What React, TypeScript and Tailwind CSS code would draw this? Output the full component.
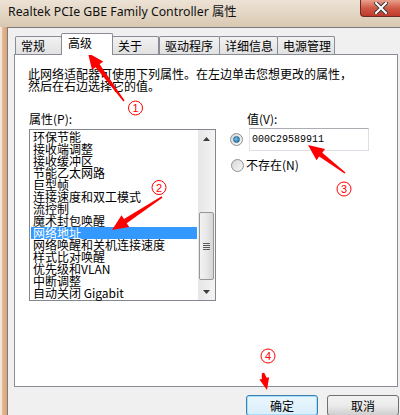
import React from "react";

const items = [
  "环保节能",
  "接收端调整",
  "接收缓冲区",
  "节能乙太网路",
  "巨型帧",
  "连接速度和双工模式",
  "流控制",
  "魔术封包唤醒",
  "网络地址",
  "网络唤醒和关机连接速度",
  "样式比对唤醒",
  "优先级和VLAN",
  "中断调整",
  "自动关闭 Gigabit",
];

const tabs = [
  { label: "常规", w: "w-[47px]" },
  { label: "高级", w: "w-[52px]", active: true },
  { label: "关于", w: "w-[47px]" },
  { label: "驱动程序", w: "w-[61px]" },
  { label: "详细信息", w: "w-[59px]" },
  { label: "电源管理", w: "w-[58px]" },
];

function arrow(tx: number, ty: number, hx: number, hy: number, head = 16, hw = 7, sw = 2.5, tw = 0.8) {
  const dx = hx - tx;
  const dy = hy - ty;
  const l = Math.sqrt(dx * dx + dy * dy);
  const ux = dx / l;
  const uy = dy / l;
  const nx = -uy;
  const ny = ux;
  const bx = hx - ux * head;
  const by = hy - uy * head;
  const pts = [
    [tx + nx * tw, ty + ny * tw],
    [bx + nx * sw, by + ny * sw],
    [bx + nx * hw, by + ny * hw],
    [hx, hy],
    [bx - nx * hw, by - ny * hw],
    [bx - nx * sw, by - ny * sw],
    [tx - nx * tw, ty - ny * tw],
  ];
  return pts.map((p) => p[0].toFixed(1) + "," + p[1].toFixed(1)).join(" ");
}

function Radio({ checked }: { checked?: boolean }) {
  return (
    <div className="w-[13px] h-[13px] rounded-full border border-[#8e8f8f] bg-gradient-to-br from-[#d6d6d6] to-[#f8f8f8] flex items-center justify-center">
      {checked && (
        <div className="w-[7px] h-[7px] rounded-full bg-[radial-gradient(circle_at_40%_40%,#6ec8f0,#1c5b8a)] border border-[#2f6f9a]" />
      )}
    </div>
  );
}

export default function App() {
  return (
    <div className="relative w-[400px] h-[415px] overflow-hidden bg-[#f0f0f0] font-['Noto_Sans_CJK_SC',sans-serif] text-[12px] text-black">
      {/* title bar */}
      <div className="h-[27px] flex items-start bg-gradient-to-b from-[#ece2d5] via-[#e3d6c4] to-[#d9c8b1]">
        <div className="pl-[8px] pt-[4px] text-[12.3px] leading-[16px] font-['Noto_Sans','Noto_Sans_CJK_SC',sans-serif] text-[#111]">
          Realtek PCIe GBE Family Controller 属性
        </div>
        <div className="ml-auto w-[40px] h-[17px] rounded-bl-[4px] border border-t-0 border-r-0 border-[#6b2a22] bg-gradient-to-b from-[#e8a08e] via-[#cf5a45] to-[#c0392b] flex items-center justify-center">
          <svg width="14" height="12" viewBox="0 0 14 12">
            <path d="M2 1 L12 11 M12 1 L2 11" stroke="#3a3a3a" strokeWidth="4" strokeLinecap="square" />
            <path d="M2 1 L12 11 M12 1 L2 11" stroke="#ffffff" strokeWidth="2" strokeLinecap="square" />
          </svg>
        </div>
      </div>

      <div className="flex h-[388px]">
        {/* left frame */}
        <div className="w-[2px] bg-[#f2e6da]" />
        <div className="w-[5px] bg-gradient-to-r from-[#e6bb95] to-[#dba47a]" />
        <div className="flex-1 border-l border-t border-[#7c7c7c] bg-[#f0f0f0]">
          {/* tabs */}
          <div className="flex items-end h-[26px] pl-[7px]">
            {tabs.map((t, i) =>
              t.active ? (
                <div
                  key={t.label}
                  className={`${t.w} ml-[-1px] h-[22px] mb-[-1px] relative z-10 bg-white border border-b-0 border-[#898c95] rounded-t-[2px] pl-[6px] pt-[2px] leading-[14px]`}
                >
                  {t.label}
                </div>
              ) : (
                <div
                  key={t.label}
                  className={`${t.w} ${i === 0 || i === 3 ? "" : "ml-[-1px]"} h-[18px] bg-gradient-to-b from-[#f2f2f2] to-[#e1e1e1] border border-b-0 border-[#898c95] rounded-t-[2px] pl-[5px] pt-[2px] leading-[14px]`}
                >
                  {t.label}
                </div>
              )
            )}
          </div>

          {/* panel */}
          <div className="ml-[6px] w-[384px] h-[333px] bg-white border border-[#898c95] pl-[13px] pt-[13px]">
            <div className="leading-[12px]">
              此网络适配器可使用下列属性。在左边单击您想更改的属性，
              <br />
              然后在右边选择它的值。
            </div>

            <div className="flex mt-[21px] ml-[1px]">
              <div className="w-[187px]">
                <div className="leading-[12px]">属性(P):</div>
                <div className="mt-[4px] h-[172px] border border-[#828790] flex">
                  <div className="flex-1 pt-[1px] px-[1px]">
                    {items.map((it) => (
                      <div
                        key={it}
                        className={`h-[12px] leading-[12px] pl-[2px] whitespace-nowrap ${
                          it === "网络地址" ? "bg-[#3399ff] text-white" : ""
                        }`}
                      >
                        {it}
                      </div>
                    ))}
                  </div>
                  {/* scrollbar */}
                  <div className="w-[17px] flex flex-col bg-gradient-to-r from-[#e6e6e6] to-[#f4f4f4]">
                    <div className="h-[17px] flex items-center justify-center">
                      <svg width="7" height="4" viewBox="0 0 7 4">
                        <path d="M0 4 L3.5 0 L7 4 Z" fill="#3c3c3c" />
                      </svg>
                    </div>
                    <div className="h-[65px]" />
                    <div className="h-[68px] mx-[1px] rounded-[2px] border border-[#979797] bg-gradient-to-r from-[#f3f3f3] via-[#e8e8e8] to-[#d6d6d6] flex flex-col items-center justify-center gap-[1px]">
                      <div className="w-[7px] h-[1px] bg-[#5b5b5b]" />
                      <div className="w-[7px] h-[1px] bg-[#5b5b5b]" />
                      <div className="w-[7px] h-[1px] bg-[#5b5b5b]" />
                      <div className="w-[7px] h-[1px] bg-[#5b5b5b]" />
                    </div>
                    <div className="h-[3px]" />
                    <div className="h-[17px] flex items-center justify-center">
                      <svg width="7" height="4" viewBox="0 0 7 4">
                        <path d="M0 0 L3.5 4 L7 0 Z" fill="#3c3c3c" />
                      </svg>
                    </div>
                  </div>
                </div>
              </div>

              <div className="ml-[14px]">
                <div className="pl-[17px] leading-[12px]">值(V):</div>
                <div className="flex items-center mt-[3px] h-[23px]">
                  <Radio checked />
                  <div className="ml-[6px] w-[120px] h-[23px] border border-[#dbdfe6] border-t-[#abadb3] border-l-[#e2e3ea] flex items-center pl-[2px] font-['Liberation_Mono',monospace] text-[10px]">
                    000C29589911
                  </div>
                </div>
                <div className="flex items-center mt-[8px] h-[12px] ml-[1px]">
                  <Radio />
                  <span className="ml-[2px] leading-[12px]">不存在(N)</span>
                </div>
              </div>
            </div>
          </div>

          {/* buttons */}
          <div className="flex justify-end gap-[9px] pr-[1px] mt-[8px]">
            <button className="w-[72px] h-[21px] rounded-[3px] border border-[#3c7fb1] bg-gradient-to-b from-[#eaf6fd] to-[#d9eefb] shadow-[inset_0_0_0_1px_#a6e0f8] leading-[14px]">
              确定
            </button>
            <button className="w-[72px] h-[21px] rounded-[3px] border border-[#707070] bg-gradient-to-b from-[#f2f2f2] via-[#ebebeb] to-[#cfcfcf] leading-[14px]">
              取消
            </button>
          </div>
        </div>
      </div>

      {/* annotations */}
      <svg className="absolute inset-0 pointer-events-none" width="400" height="415" viewBox="0 0 400 415">
        <polygon points={arrow(124, 101, 88, 53)} fill="#ff0000" />
        <polygon points={arrow(162, 197, 112, 230)} fill="#ff0000" />
        <polygon points={arrow(345, 173, 308, 145)} fill="#ff0000" />
        <polygon points={arrow(263, 373, 267, 390, 12, 5, 2.5, 1.2)} fill="#ff0000" />
        {[
          [135.5, 108, "1"],
          [159, 187.5, "2"],
          [344, 189, "3"],
          [268, 356, "4"],
        ].map(([x, y, n]) => (
          <g key={n as string}>
            <circle cx={x as number} cy={y as number} r="7" fill="none" stroke="#ff0000" strokeWidth="1" />
            <text
              x={x as number}
              y={(y as number) + 4}
              textAnchor="middle"
              fontSize="11"
              fill="#ff0000"
              fontFamily="Liberation Sans, sans-serif"
            >
              {n}
            </text>
          </g>
        ))}
      </svg>
    </div>
  );
}
